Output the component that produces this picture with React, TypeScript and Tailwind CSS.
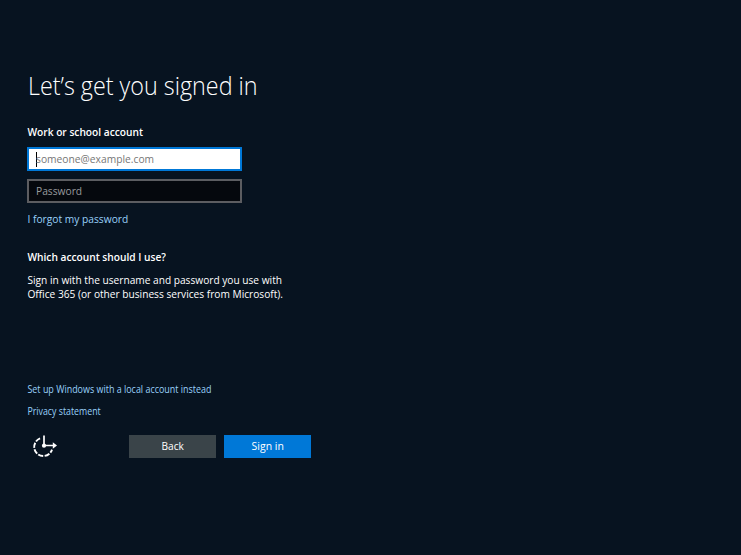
import React from "react";

function SetupIcon() {
  return (
    <svg width="28" height="28" viewBox="0 0 28 28" fill="none" stroke="#fff" strokeWidth="1.9">
      <path d="M10.1 6.4A9.1 9.1 0 1 0 22 17.6" strokeDasharray="5.2 1.4" />
      <path d="M14 3.5v10" strokeWidth="1.7" />
      <path d="M14 13.5h10" strokeWidth="1.5" />
      <circle cx="14" cy="13.7" r="2.1" fill="#fff" stroke="none" />
      <path d="M22.8 10.3l4.2 3.2-4.2 3.2z" fill="#fff" stroke="none" />
    </svg>
  );
}

export default function App() {
  return (
    <main className="flex h-[555px] w-[741px] flex-col items-start overflow-hidden bg-[#071320] pl-[27px] pt-[67px] font-['Open_Sans','Noto_Sans',sans-serif] text-[11.5px] text-white whitespace-nowrap">
      <h1 className="h-9 origin-left scale-x-[.933] pl-px text-[25px] font-light leading-9">Let’s get you signed in</h1>
      <h2 className="mt-[21px] h-4 origin-left scale-x-[.885] pl-[0.5px] font-semibold leading-4">Work or school account</h2>
      <div className="mt-[7px] flex h-6 w-[215px] items-center border-2 border-[#0078d7] bg-white pl-[7px] text-[#767676]">
        <span className="h-[15px] w-px bg-black" />
        <span className="-ml-px origin-left scale-x-[.893]">someone@example.com</span>
      </div>
      <div className="mt-2 flex h-6 w-[215px] items-center border-2 border-[#5c5d61] bg-[#05080d] pl-[7px] text-[#999b9e]">
        <span className="origin-left scale-x-[.89]">Password</span>
      </div>
      <a className="mt-2 h-4 origin-left scale-x-[.89] pl-[0.5px] leading-4 text-[#99d1fa]">I forgot my password</a>
      <h2 className="mt-[22px] h-4 origin-left scale-x-[.885] pl-[0.5px] font-semibold leading-4">Which account should I use?</h2>
      <p className="mt-2 h-[29px] origin-left scale-x-[.883] pl-[0.5px] leading-[14px]">
        Sign in with the username and password you use with
        <br />
        Office 365 (or other business services from Microsoft).
      </p>
      <a className="mt-[79px] h-4 origin-left scale-x-[.894] pl-[0.5px] text-[10px] leading-4 text-[#99d1fa]">Set up Windows with a local account instead</a>
      <a className="mt-[6px] h-4 origin-left scale-x-[.88] pl-[0.5px] text-[10px] leading-4 text-[#99d1fa]">Privacy statement</a>
      <div className="mt-[13px] flex h-7 items-center">
        <div className="ml-[3px] w-[99px]"><SetupIcon /></div>
        <button className="flex h-[23px] w-[87px] items-center justify-center bg-[#3a4449]">
          <span className="scale-x-[.88]">Back</span>
        </button>
        <button className="ml-2 flex h-[23px] w-[87px] items-center justify-center bg-[#0078d7]">
          <span className="scale-x-[.91]">Sign in</span>
        </button>
      </div>
    </main>
  );
}
